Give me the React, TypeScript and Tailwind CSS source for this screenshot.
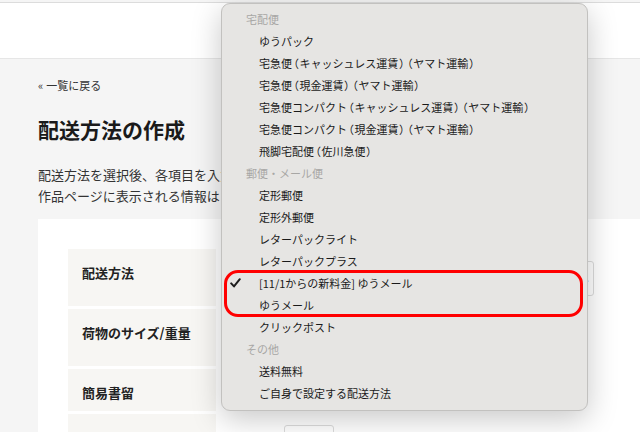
const sections = [
  {
    title: "宅配便",
    items: [
      "ゆうパック",
      "宅急便（キャッシュレス運賃）（ヤマト運輸）",
      "宅急便（現金運賃）（ヤマト運輸）",
      "宅急便コンパクト（キャッシュレス運賃）（ヤマト運輸）",
      "宅急便コンパクト（現金運賃）（ヤマト運輸）",
      "飛脚宅配便（佐川急便）",
    ],
  },
  {
    title: "郵便・メール便",
    items: [
      "定形郵便",
      "定形外郵便",
      "レターパックライト",
      "レターパックプラス",
      "[11/1からの新料金] ゆうメール",
      "ゆうメール",
      "クリックポスト",
    ],
  },
  {
    title: "その他",
    items: ["送料無料", "ご自身で設定する配送方法"],
  },
];

const selected = "[11/1からの新料金] ゆうメール";

// full-width parens are set proportional, like the menu font does
const Label = ({ text }: { text: string }) => (
  <>
    {text.split(/([（）])/).map((part, i) =>
      part === "（" || part === "）" ? (
        <span key={i} className="mx-[1px] [font-feature-settings:'palt']">
          {part}
        </span>
      ) : (
        <span key={i}>{part}</span>
      )
    )}
  </>
);

const Check = () => (
  <svg width="11" height="10" viewBox="0 0 11 10" className="text-[#1c1c1c]">
    <path d="M1.2 5.4 L4 8.4 L9.8 1.2" fill="none" stroke="currentColor" strokeWidth="2" strokeLinecap="round" strokeLinejoin="round" />
  </svg>
);

const ShippingMenu = () => {
  return (
    <div className="absolute left-[221px] top-[3px] w-[367px] rounded-[9px] border border-[#c2c1bf] bg-[#e6e5e3] pt-[4px] pb-[6px] shadow-[0_8px_30px_rgba(0,0,0,0.22)]">
      {sections.map((s) => (
        <div key={s.title}>
          <div className="flex h-[22px] items-center pl-[24px] text-[11px] text-[#a8a7a5]">
            {s.title}
          </div>
          {s.items.map((item) => (
            <div key={item} className="relative flex h-[22px] items-center pl-[37px] text-[11px] text-[#1a1a1a]">
              {item === selected && (
                <span className="absolute left-[8px] top-[6px]">
                  <Check />
                </span>
              )}
              <Label text={item} />
            </div>
          ))}
        </div>
      ))}
    </div>
  );
};

const Row = ({ label, height, children }: { label: string; height: string; children?: React.ReactNode }) => (
  <div className={`flex ${height} border-b-[3px] border-white`}>
    <div className="w-[148px] shrink-0 bg-[#f7f6f3] pl-[14px] pt-[14px] text-[13px] font-bold text-[#222]">
      {label}
    </div>
    <div className="flex-1 pl-[20px] pt-[12px]">{children}</div>
  </div>
);

export default function App() {
  return (
    <div className="relative h-[432px] w-[640px] overflow-hidden bg-[#f5f5f5] font-['Noto_Sans_CJK_JP','Noto_Sans',sans-serif]">
      <div className="h-[57px] border-t border-b border-t-[#dcdcdc] border-b-[#e6e6e6] bg-white mt-[2px]" />
      <div className="pl-[38px]">
        <div className="pt-[18px] text-[11px] text-[#333]">
          <span className="mr-[3px]">«</span>一覧に戻る
        </div>
        <h1 className="mt-[20px] text-[21px] font-bold text-[#1a1a1a]">配送方法の作成</h1>
        <p className="mt-[19px] text-[13px] leading-[21px] text-[#333]">
          配送方法を選択後、各項目を入力してください。
          <br />
          作品ページに表示される情報は
        </p>
        <div className="mt-[13px] h-[300px] bg-white pl-[30px] pt-[30px]">
          <Row label="配送方法" height="h-[60px]">
            <div className="flex h-[35px] w-[358px] items-center justify-end rounded-[3px] border border-[#dcdcdc] pr-[3px] text-[10px] text-[#333]">
              ⌄
            </div>
          </Row>
          <Row label="荷物のサイズ/重量" height="h-[60px]" />
          <Row label="簡易書留" height="h-[45px]" />
          <Row label="" height="h-[40px]">
            <div className="ml-[48px] mt-[-1px] h-[30px] w-[50px] rounded-[3px] border border-[#dcdcdc]" />
          </Row>
        </div>
      </div>
      <ShippingMenu />
      <div className="absolute left-[224px] top-[270px] h-[47px] w-[359px] rounded-[14px] border-[3px] border-[#ff0000]" />
    </div>
  );
}
